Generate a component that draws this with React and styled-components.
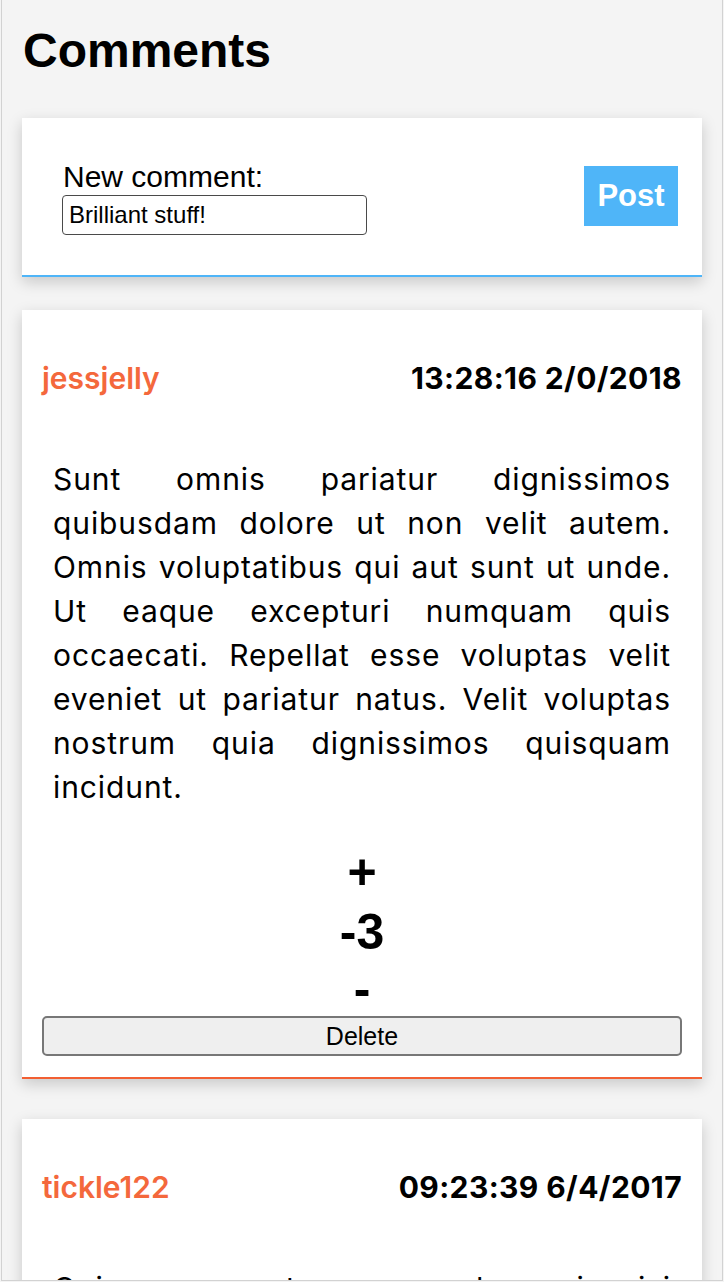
import React from 'react';
import styled, { createGlobalStyle } from 'styled-components';

const GlobalStyle = createGlobalStyle`
    html, body {
        margin: 0;
        padding: 0;
        background: #f4f4f4;
    }
    body {
        font-family: "Liberation Sans", Arial, sans-serif;
        overflow: hidden;
    }
`;

const Frame = styled.div`
    box-sizing: border-box;
    height: 1281px;
    margin: 0 1px;
    padding: 26px 20px 0;
    border: 1px solid #d2d2d2;
    border-top: none;
    overflow: hidden;
`;

const Title = styled.h1`
    margin: 0 0 42px 1px;
    font-size: 48px;
    line-height: 50px;
    font-weight: 700;
    color: #000;
`;

const Card = styled.div`
    background: #fff;
    border-bottom: 2px solid ${props => props.accent};
    box-shadow: 0 5px 14px rgba(0, 0, 0, 0.18);
    margin-bottom: ${props => props.gap || 40}px;
`;

const PostForm = styled.form`
    display: flex;
    align-items: center;
    justify-content: space-between;
    padding: 44px 24px 40px 41px;
`;

const Field = styled.label`
    display: flex;
    flex-direction: column;
    font-size: 30px;
    line-height: 1;
    color: #000;

    input {
        box-sizing: border-box;
        width: 305px;
        height: 40px;
        margin-top: 3px;
        margin-left: -1px;
        padding: 0 6px;
        border: 1.5px solid #4a4a4a;
        border-radius: 4px;
        font-family: "Liberation Sans", Arial, sans-serif;
        font-size: 24px;
        color: #000;
        outline: none;
    }
`;

const PostButton = styled.button`
    width: 94px;
    height: 60px;
    margin-bottom: 6px;
    border: none;
    background: #4fb5f8;
    color: #fff;
    font-family: "Liberation Sans", Arial, sans-serif;
    font-weight: 700;
    font-size: 31px;
    padding: 0;
    cursor: pointer;
`;

const CardBody = styled.div`
    padding: 53px 20px 21px;
`;

const Header = styled.div`
    display: flex;
    justify-content: space-between;
    align-items: baseline;
    font-family: Inter, "Noto Sans", sans-serif;
    font-size: 30px;
    line-height: 1;
`;

const Author = styled.span`
    color: #f4683c;
    font-weight: 600;
`;

const Stamp = styled.span`
    color: #000;
    font-weight: 700;
    letter-spacing: 0.4px;
`;

const Text = styled.p`
    margin: 64px 0 0;
    padding: 0 11px;
    font-family: Inter, "Noto Sans", sans-serif;
    font-size: 30px;
    letter-spacing: 0.9px;
    line-height: 44px;
    text-align: justify;
    color: #000;
`;

const Votes = styled.div`
    display: flex;
    flex-direction: column;
    align-items: center;
    margin-top: 38px;
    font-family: "Liberation Sans", Arial, sans-serif;
    font-weight: 700;
    font-size: 50px;
    line-height: 50px;
`;

const VoteButton = styled.button`
    border: none;
    background: none;
    padding: 0;
    height: 50px;
    margin-bottom: ${props => props.after || 0}px;
    font: inherit;
    color: #000;
    cursor: pointer;
`;

const Count = styled.div`
    height: 50px;
    margin-bottom: 7px;
`;

const DeleteButton = styled.button`
    display: block;
    box-sizing: border-box;
    width: 100%;
    height: 40px;
    margin-top: 2px;
    border: 2px solid #777;
    border-radius: 5px;
    background: #efefef;
    font-family: "Liberation Sans", Arial, sans-serif;
    font-size: 25px;
    color: #000;
    cursor: pointer;
`;

const comments = [
    {
        author: 'jessjelly',
        stamp: '13:28:16 2/0/2018',
        votes: -3,
        body: 'Sunt omnis pariatur dignissimos quibusdam dolore ut non velit autem. Omnis voluptatibus qui aut sunt ut unde. Ut eaque excepturi numquam quis occaecati. Repellat esse voluptas velit eveniet ut pariatur natus. Velit voluptas nostrum quia dignissimos quisquam incidunt.'
    },
    {
        author: 'tickle122',
        stamp: '09:23:39 6/4/2017',
        votes: 4,
        body: 'Quia consequatur recusandae quis nisi tempora sit ut dolores ut dolor. Iste aliquid deleniti omnis et quia sint rerum et. Qui rerum dolor ut aut.'
    }
];

function Comment({ comment }) {
    return (
        <Card accent="#f25f32">
            <CardBody>
                <Header>
                    <Author>{comment.author}</Author>
                    <Stamp>{comment.stamp}</Stamp>
                </Header>
                <Text>{comment.body}</Text>
                <Votes>
                    <VoteButton after={10}>+</VoteButton>
                    <Count>{comment.votes}</Count>
                    <VoteButton>-</VoteButton>
                </Votes>
                <DeleteButton>Delete</DeleteButton>
            </CardBody>
        </Card>
    );
}

export default function App() {
    return (
        <Frame>
            <GlobalStyle />
            <Title>Comments</Title>
            <Card accent="#4fb5f8" gap={33}>
                <PostForm onSubmit={e => e.preventDefault()}>
                    <Field>
                        New comment:
                        <input type="text" defaultValue="Brilliant stuff!" />
                    </Field>
                    <PostButton type="submit">Post</PostButton>
                </PostForm>
            </Card>
            {comments.map(c => <Comment key={c.author} comment={c} />)}
        </Frame>
    );
}
